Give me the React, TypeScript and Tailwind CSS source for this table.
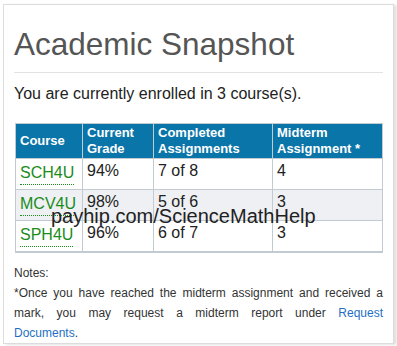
import React from "react";

const courses = [
  { code: "SCH4U", grade: "94%", done: "7 of 8", mid: "4" },
  { code: "MCV4U", grade: "98%", done: "5 of 6", mid: "3" },
  { code: "SPH4U", grade: "96%", done: "6 of 7", mid: "3" },
];

export default function App() {
  return (
    <div
      className="relative h-[346px] w-[397px] overflow-hidden bg-white pl-[3px] pt-[4px]"
      style={{ fontFamily: '"Liberation Sans", Arial, sans-serif' }}
    >
      <div className="w-[391px] border border-[#dcdcdc] bg-white px-[10px] pt-[21px] shadow-[3px_1px_3px_rgba(0,0,0,0.12)]">
        <h1 className="text-[31.5px] leading-[36px] text-[#555]">Academic Snapshot</h1>
        <hr className="mt-[10px] border-0 border-t border-[#e2e2e2]" />
        <p className="mt-[9px] text-[16px] leading-[24px] text-[#222]">
          You are currently enrolled in 3 course(s).
        </p>

        <table className="mt-[17px] ml-[1px] w-[367px] table-fixed border-collapse border border-b-2 border-[#c3cbd2]">
          <colgroup>
            <col className="w-[67px]" />
            <col className="w-[71px]" />
            <col className="w-[119px]" />
            <col className="w-[110px]" />
          </colgroup>
          <thead>
            <tr className="h-[35px] bg-[#0a75a8] text-left text-[13px] font-bold leading-[16px] text-white">
              <th className="border border-[#c3cbd2] px-[4px] align-middle">Course</th>
              <th className="border border-[#c3cbd2] px-[4px] pb-[1px] align-middle">
                Current
                <br />
                Grade
              </th>
              <th className="border border-[#c3cbd2] px-[4px] pb-[1px] align-middle">
                Completed
                <br />
                Assignments
              </th>
              <th className="border border-[#c3cbd2] px-[4px] pb-[1px] align-middle">
                Midterm
                <br />
                Assignment *
              </th>
            </tr>
          </thead>
          <tbody className="text-[16px] leading-[20px] text-[#222]">
            {courses.map((c, i) => (
              <tr key={c.code} className={`h-[31px] ${i === 1 ? "bg-[#eef0f4]" : "bg-white"}`}>
                <td className="border border-[#c3cbd2] px-[4px] pt-[4px] align-top">
                  <span className="inline-block border-b border-dotted border-[#1a8c1a] pb-[1px] text-[#1a8c1a]">
                    {c.code}
                  </span>
                </td>
                <td className="border border-[#c3cbd2] px-[4px] pt-[2px] align-top">{c.grade}</td>
                <td className="border border-[#c3cbd2] px-[4px] pt-[2px] align-top">{c.done}</td>
                <td className="border border-[#c3cbd2] px-[4px] pt-[2px] align-top">{c.mid}</td>
              </tr>
            ))}
          </tbody>
        </table>

        {/* lines broken as in the source so the justify spacing lands the same */}
        <div className="mt-[10px] w-[369px] text-[12px] leading-[20px] text-[#333]">
          <p>Notes:</p>
          <p className="text-justify [text-align-last:justify]">
            *Once you have reached the midterm assignment and received a
          </p>
          <p className="text-justify [text-align-last:justify]">
            mark, you may request a midterm report under <a className="text-[#1e6fc4]">Request</a>
          </p>
          <p>
            <a className="text-[#1e6fc4]">Documents</a>.
          </p>
        </div>
      </div>

      <div className="pointer-events-none absolute left-[51px] top-[206px] text-[20px] leading-[20px] text-[#222]">
        payhip.com/ScienceMathHelp
      </div>
    </div>
  );
}
